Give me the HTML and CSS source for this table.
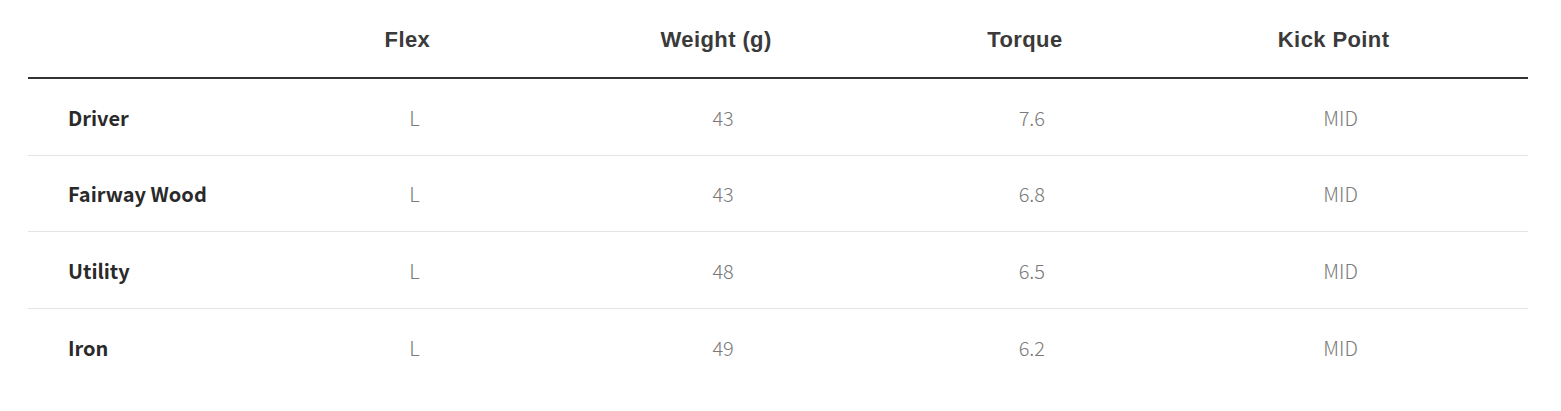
FILE: index.html
```html
<!DOCTYPE html>
<html lang="en">
<head>
<meta charset="utf-8">
<link rel="stylesheet" href="styles.css">
</head>
<body>
<div class="spec">
  <div class="head">
    <div class="hcell"></div>
    <div class="hcell">Flex</div>
    <div class="hcell">Weight (g)</div>
    <div class="hcell">Torque</div>
    <div class="hcell">Kick Point</div>
  </div>
  <div class="row">
    <div class="label">Driver</div>
    <div class="val">L</div>
    <div class="val">43</div>
    <div class="val">7.6</div>
    <div class="val">MID</div>
  </div>
  <div class="row">
    <div class="label">Fairway Wood</div>
    <div class="val">L</div>
    <div class="val">43</div>
    <div class="val">6.8</div>
    <div class="val">MID</div>
  </div>
  <div class="row">
    <div class="label">Utility</div>
    <div class="val">L</div>
    <div class="val">48</div>
    <div class="val">6.5</div>
    <div class="val">MID</div>
  </div>
  <div class="row last">
    <div class="label">Iron</div>
    <div class="val">L</div>
    <div class="val">49</div>
    <div class="val">6.2</div>
    <div class="val">MID</div>
  </div>
</div>
</body>
</html>
```

FILE: styles.css
```css
html, body {
  margin: 0;
  padding: 0;
  background: #ffffff;
}

.spec {
  width: 1500px;
  margin-left: 28px;
}

.head {
  display: grid;
  grid-template-columns: 185px repeat(4, 1fr);
  padding: 0 40px;
  height: 77px;
  align-items: center;
  border-bottom: 2px solid #333333;
  font-family: "Liberation Sans", Arial, sans-serif;
  font-weight: bold;
  font-size: 22px;
  letter-spacing: 0.4px;
  color: #3a3a3a;
}

.hcell {
  text-align: center;
  padding-top: 2px;
}

.row {
  display: grid;
  grid-template-columns: 192px repeat(4, 1fr);
  padding: 0 33px 0 40px;
  height: 76.5px;
  box-sizing: border-box;
  align-items: center;
  border-bottom: 1px solid #e4e4e4;
  font-family: "Noto Sans CJK KR", "Noto Sans", sans-serif;
  font-size: 20px;
}

.row.last {
  border-bottom: none;
}

.label {
  font-weight: bold;
  color: #2a2a2a;
  padding-top: 1px;
}

.val {
  text-align: center;
  font-weight: 300;
  color: #7a7a7a;
  padding-top: 1px;
}
```
